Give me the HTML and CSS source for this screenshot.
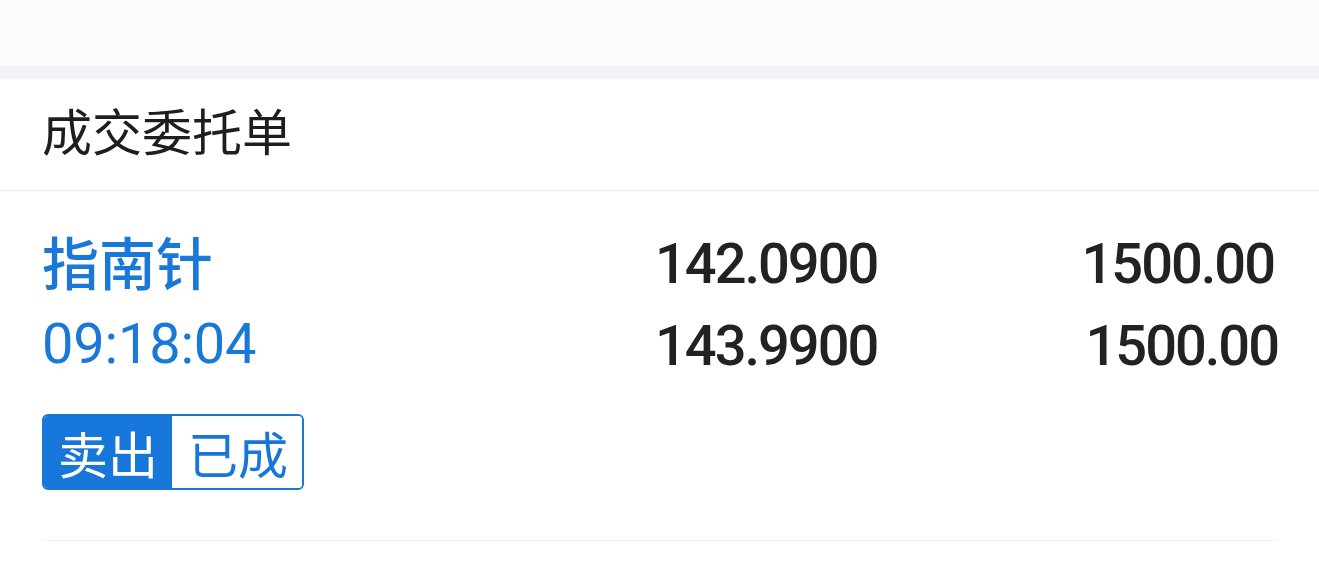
FILE: index.html
```html
<!DOCTYPE html>
<html lang="zh">
<head>
<meta charset="utf-8">
<title>成交委托单</title>
<link rel="stylesheet" href="styles.css">
</head>
<body>
<div class="topbar"></div>
<div class="band"></div>
<section class="card">
  <div class="card-title">成交委托单</div>
  <div class="order">
    <div class="grid">
      <div class="name">指南针</div>
      <div class="num mid">142.0900</div>
      <div class="num right">1500.00</div>
      <div class="time">09:18:04</div>
      <div class="num mid">143.9900</div>
      <div class="num right r2">1500.00</div>
    </div>
    <div class="badge"><span class="badge-fill">卖出</span><span class="badge-plain">已成</span></div>
    <div class="order-line"></div>
  </div>
</section>
</body>
</html>
```
FILE: styles.css
```css
html, body {
  margin: 0;
  padding: 0;
  background: #ffffff;
  font-family: "Noto Sans CJK SC", "Noto Sans", sans-serif;
  color: #222222;
}
.topbar {
  height: 66px;
  background: #fcfcfe;
}
.band {
  height: 13px;
  background: #f2f2f7;
}
.card {
  background: #ffffff;
}
.card-title {
  height: 112px;
  box-sizing: border-box;
  padding: 20px 0 0 42px;
  font-size: 50px;
  line-height: 60px;
  color: #1e1e1e;
  border-bottom: 1px solid #ededf0;
}
.order {
  padding: 28px 41px 0 42px;
}
.grid {
  display: grid;
  grid-template-columns: 613px 1fr auto;
  grid-auto-rows: 82px;
  align-items: center;
}
.name {
  font-size: 57px;
  font-weight: 500;
  color: #1a78d8;
  line-height: 82px;
}
.time {
  font-family: Roboto, "Noto Sans", sans-serif;
  font-size: 56px;
  color: #1a78d8;
  line-height: 82px;
  padding-top: 4px;
  letter-spacing: -0.2px;
}
.num {
  font-family: Roboto, "Noto Sans", sans-serif;
  font-weight: 500;
  font-size: 56px;
  letter-spacing: -2px;
  line-height: 82px;
  padding-top: 8px;
  color: #222222;
}
.right {
  text-align: right;
  padding-right: 4px;
}
.right.r2 {
  padding-right: 0;
}
.badge {
  display: inline-flex;
  margin-top: 31px;
  border: 2px solid #1776da;
  border-radius: 6px;
  overflow: hidden;
  font-size: 50px;
  line-height: 72px;
}
.badge-fill {
  background: #1776da;
  color: #ffffff;
  padding: 0 14px 0 14px;
}
.badge-plain {
  background: #ffffff;
  color: #1776da;
  padding: 0 14px 0 16px;
}
.order-line {
  margin-top: 50px;
  height: 1px;
  background: #efeff2;
}
```
